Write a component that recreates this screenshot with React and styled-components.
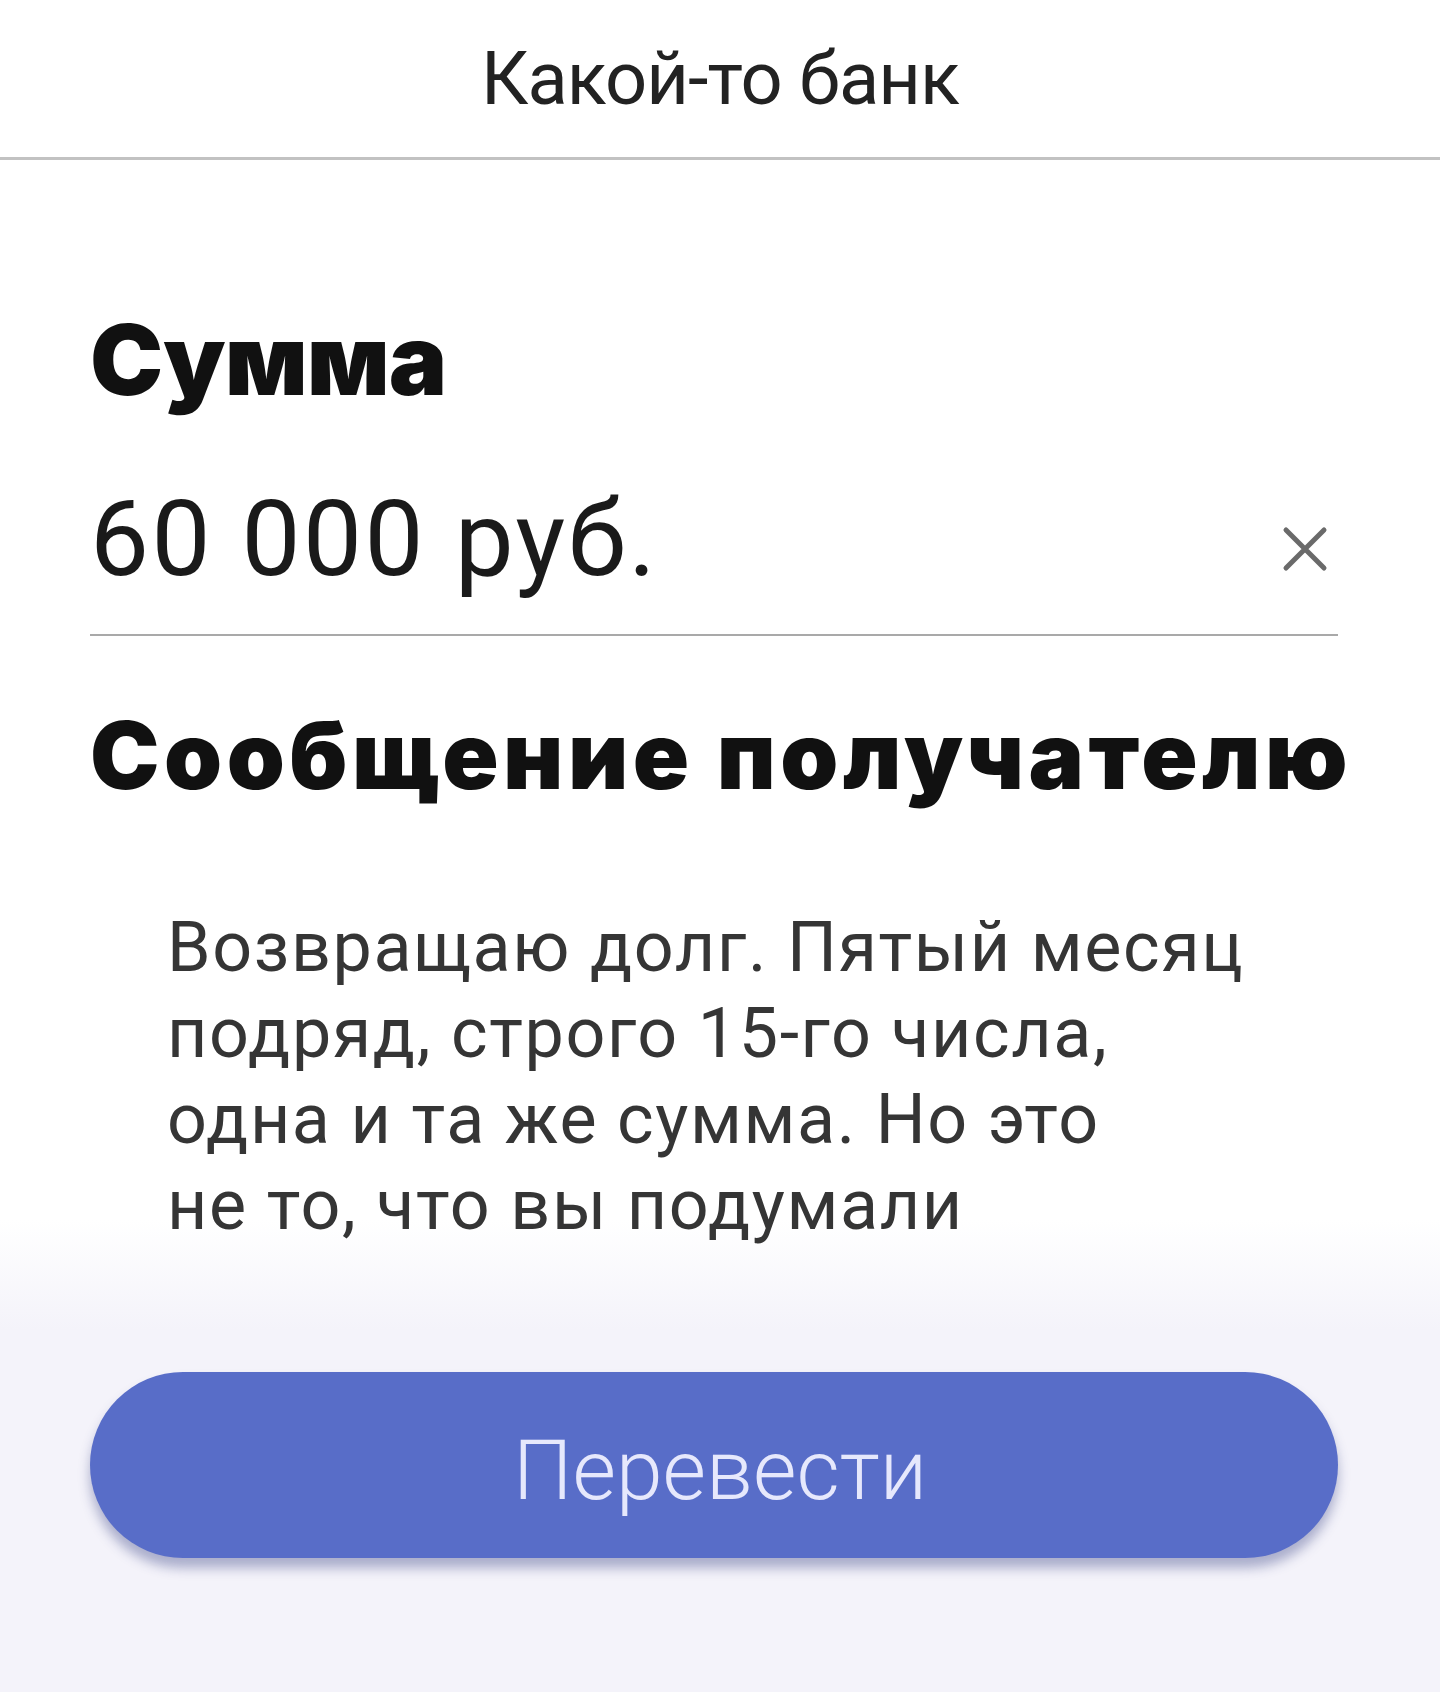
import styled, { createGlobalStyle } from "styled-components";

const GlobalStyle = createGlobalStyle`
  html, body {
    margin: 0;
    padding: 0;
    background: #ffffff;
  }
  * {
    box-sizing: border-box;
  }
`;

const Page = styled.div`
  min-height: 1692px;
  width: 1440px;
  display: flex;
  flex-direction: column;
  background: linear-gradient(
    to bottom,
    #ffffff 0,
    #ffffff 1220px,
    #f4f3fa 1330px,
    #f4f3fa 100%
  );
  font-family: Roboto, "Liberation Sans", sans-serif;
`;

const TopBar = styled.header`
  height: 160px;
  display: flex;
  align-items: center;
  justify-content: center;
  border-bottom: 3px solid #c2c2c2;
`;

const BankName = styled.h1`
  margin: 0;
  font-size: 74px;
  font-weight: 400;
  color: #222222;
  letter-spacing: -1px;
`;

const Content = styled.main`
  display: flex;
  flex-direction: column;
  padding: 0 102px 0 90px;
`;

const Label = styled.h2`
  margin: ${(props) => (props.type === "message" ? "73px 0 0" : "151px 0 0")};
  font-family: Inter, Roboto, "Liberation Sans", sans-serif;
  font-weight: 900;
  font-size: ${(props) => (props.type === "message" ? "93px" : "98px")};
  line-height: 1;
  color: #111111;
  letter-spacing: ${(props) => (props.type === "message" ? "4.5px" : "-1px")};
  white-space: nowrap;
`;

const AmountRow = styled.div`
  margin-top: 78px;
  display: flex;
  justify-content: space-between;
  padding-bottom: 42px;
  border-bottom: 2px solid #a9a9a9;
`;

const Amount = styled.span`
  font-size: 105px;
  line-height: 1;
  font-weight: 400;
  color: #1a1a1a;
  letter-spacing: 2.5px;
`;

const ClearButton = styled.button`
  align-self: flex-end;
  margin: 0 10px 20px 0;
  padding: 0;
  width: 46px;
  height: 46px;
  border: none;
  background: none;
  cursor: pointer;
`;

const Message = styled.p`
  margin: 102px 0 0;
  padding-left: 77px;
  font-size: 70px;
  line-height: 86px;
  color: #353535;
  letter-spacing: 1.6px;
`;

const SendButton = styled.button`
  margin-top: 124px;
  width: 100%;
  height: 186px;
  border: none;
  border-radius: 93px;
  background: #586dc8;
  box-shadow: 0 10px 12px rgba(50, 60, 130, 0.38);
  display: flex;
  align-items: center;
  justify-content: center;
  padding: 10px 0 0 12px;
  font-family: Roboto, "Liberation Sans", sans-serif;
  font-size: 84px;
  font-weight: 300;
  color: #e6e8fc;
  cursor: pointer;
`;

function CrossIcon() {
  return (
    <svg width="46" height="46" viewBox="0 0 46 46">
      <path
        d="M4 4 L42 42 M42 4 L4 42"
        stroke="#6a6a6a"
        strokeWidth="5"
        strokeLinecap="round"
        fill="none"
      />
    </svg>
  );
}

function App() {
  return (
    <>
      <GlobalStyle />
      <Page>
        <TopBar>
          <BankName>Какой-то банк</BankName>
        </TopBar>
        <Content>
          <Label>Сумма</Label>
          <AmountRow>
            <Amount>60 000 руб.</Amount>
            <ClearButton aria-label="Очистить">
              <CrossIcon />
            </ClearButton>
          </AmountRow>
          <Label type="message">Сообщение получателю</Label>
          <Message>
            Возвращаю долг. Пятый месяц
            <br />
            подряд, строго 15-го числа,
            <br />
            одна и та же сумма. Но это
            <br />
            не то, что вы подумали
          </Message>
          <SendButton>Перевести</SendButton>
        </Content>
      </Page>
    </>
  );
}

export default App;
